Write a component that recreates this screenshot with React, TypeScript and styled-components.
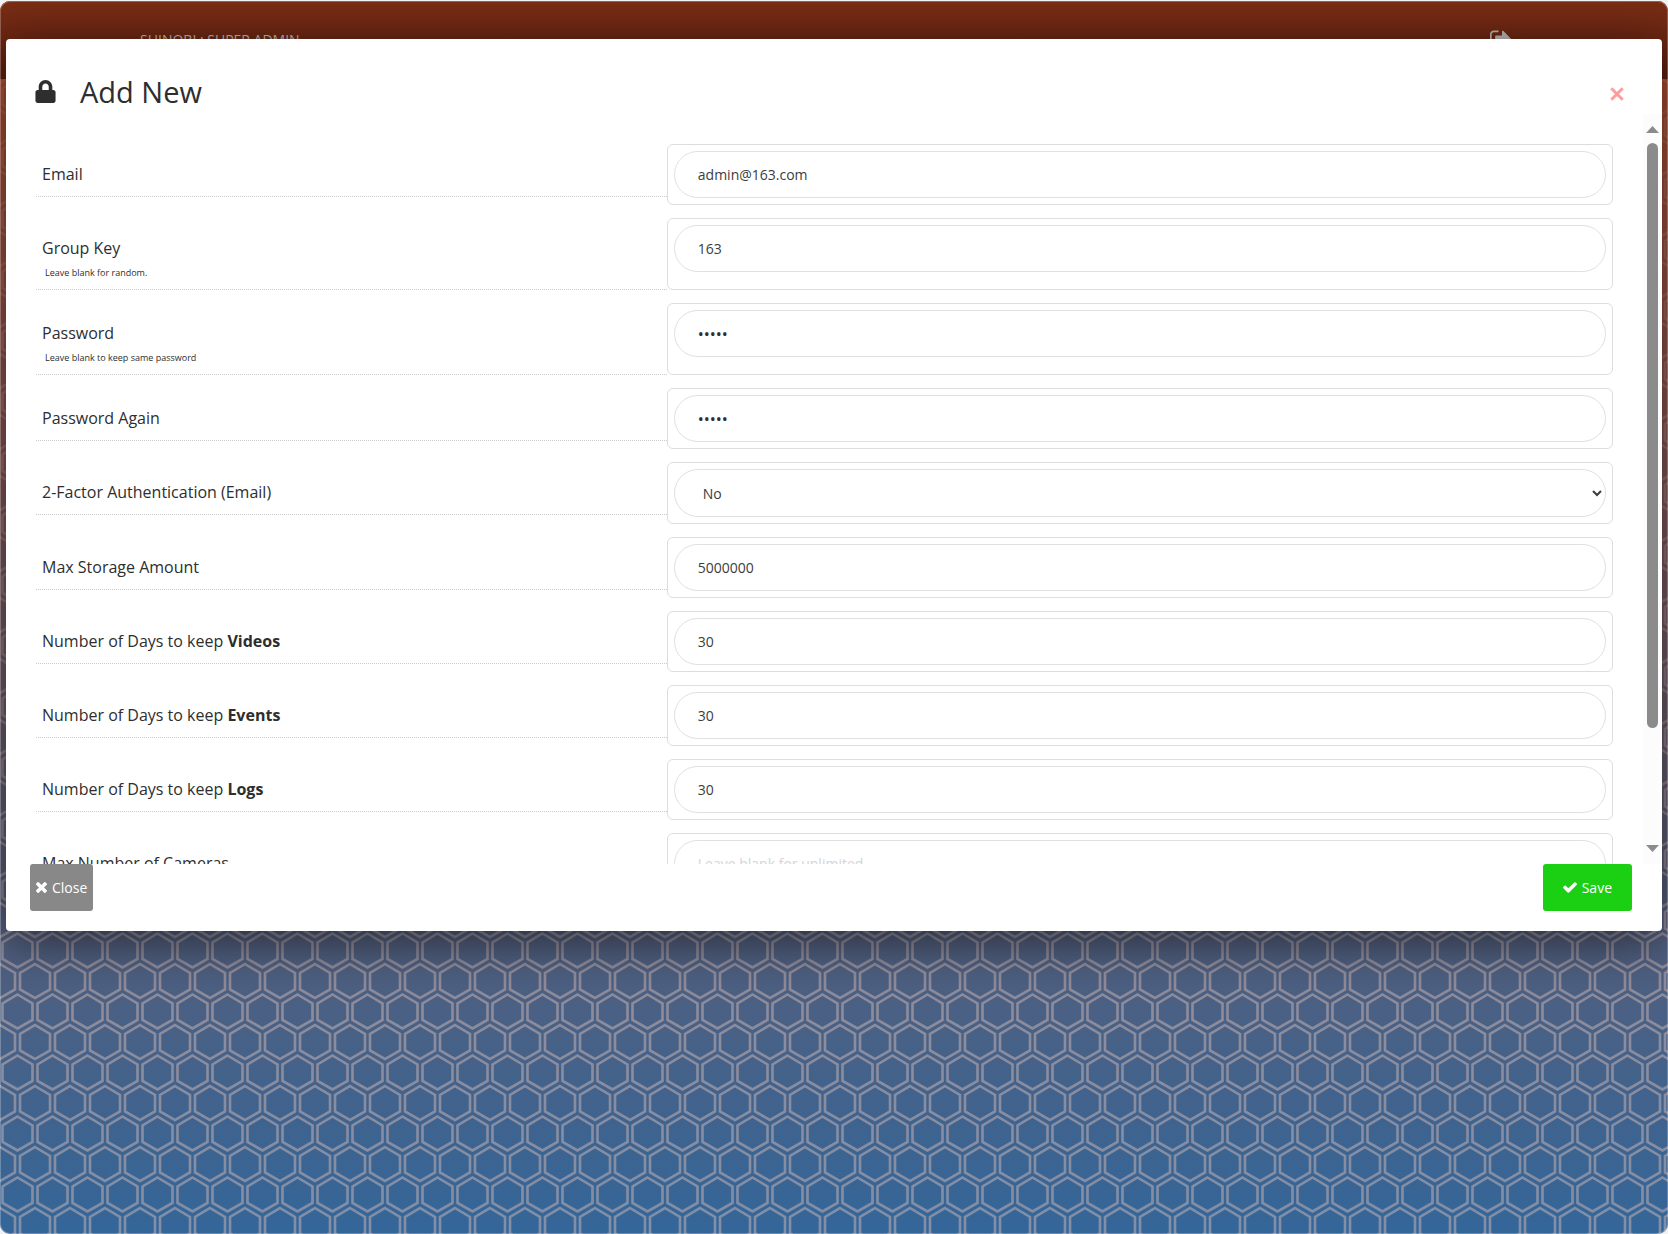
import React from 'react';
import styled, { createGlobalStyle } from 'styled-components';
import { FaLock } from 'react-icons/fa';

const GlobalStyle = createGlobalStyle`
  * { box-sizing: border-box; }
  html, body { margin: 0; background: #f2f2f2; }
  body, input, select, button { font-family: "Open Sans", "Noto Sans", sans-serif; }
`;

const Page = styled.div`
  position: relative;
  height: calc(100vh - 1px);
  margin-top: 1px;
  border-radius: 10px;
  overflow: hidden;
  background: linear-gradient(180deg, #b8502a 0%, #a44a30 8%, #346699 100%);

  &::after {
    content: "";
    position: absolute;
    inset: 0;
    border-radius: 10px;
    box-shadow: inset 0 0 0 1px rgba(255, 255, 255, 0.25);
    pointer-events: none;
  }
`;

const Pattern = styled.svg`
  position: absolute;
  inset: 0;
  width: 100%;
  height: 100%;
  mask-image: linear-gradient(180deg, rgba(0, 0, 0, 0.2), rgba(0, 0, 0, 0.6) 55%, #000 80%);
`;

const TopBar = styled.header`
  position: relative;
  display: flex;
  justify-content: space-between;
  height: 78px;
  padding: 26px 154px 0 140px;
  color: #bbb5b2;
  font-size: 14px;
  line-height: 26px;
  background: linear-gradient(180deg, #7a2d15, #5c1f0f);
`;

const Brand = styled.span``;

const Overlay = styled.div`
  position: absolute;
  inset: 38px 6px auto;
`;

const Modal = styled.section`
  display: flex;
  flex-direction: column;
  border-radius: 4px;
  background: #fff;
  color: #2e2e2e;
  box-shadow: 0 10px 50px rgba(0, 0, 0, 0.55);
`;

const ModalHeader = styled.header`
  display: flex;
  align-items: center;
  gap: 23px;
  height: 75px;
  padding: 30px 38px 0 28px;
`;

const Title = styled.h1`
  flex: 1;
  margin: 0;
  font-size: 29px;
  font-weight: 400;
  line-height: 40px;
`;

const IconButton = styled.button`
  display: flex;
  padding: 4px 0 0;
  border: 0;
  background: none;
  color: #ff9d9d;
`;

const Body = styled.div`
  display: flex;
  height: 750px;
`;

const Fields = styled.form`
  flex: 1;
  display: flex;
  flex-direction: column;
  gap: 13px;
  padding: 30px 30px 0;
  overflow: hidden;
`;

const Row = styled.div`
  display: grid;
  grid-template-columns: 2fr 3fr;
  align-items: start;
  flex: none;
`;

const Label = styled.label`
  display: flex;
  flex-direction: column;
  padding: 18px 6px 10px;
  border-bottom: 1px dotted #ccc;
  font-size: 16px;
  line-height: 24px;
`;

const LabelLine = styled.span``;

const Hint = styled.small`
  padding: 7px 3px 0;
  font-size: 9px;
  line-height: 12px;
`;

const FieldBox = styled.div`
  align-self: stretch;
  padding: 6px;
  border: 1px solid #ddd;
  border-radius: 6px;
`;

const TextInput = styled.input`
  display: block;
  width: 100%;
  height: 47px;
  padding: 0 23px;
  border: 1px solid #e0e0e0;
  border-radius: 24px;
  background: #fff;
  color: #3c3c3c;
  font-size: 14px;
  outline: 0;
  &::placeholder { color: #d4d4d4; }
  &[type="password"] { font-size: 16px; color: #2e2e2e; }
`;

const SelectInput = styled.select`
  display: block;
  width: 100%;
  height: 48px;
  padding: 0 2px 0 24px;
  border: 1px solid #e0e0e0;
  border-radius: 24px;
  background: #fff;
  color: #3c3c3c;
  font-size: 14px;
`;

const ScrollTrack = styled.div`
  display: flex;
  flex-direction: column;
  align-items: center;
  width: 19px;
  padding: 12px 0;
  background: #fcfcfc;
`;

const ScrollArrow = styled.svg`
  width: 13px;
  height: 7px;
`;

const ScrollThumb = styled.div`
  width: 11px;
  height: 585px;
  margin: 10px 0 auto;
  border-radius: 6px;
  background: #8b8b8b;
`;

const ModalFooter = styled.footer`
  display: flex;
  justify-content: space-between;
  padding: 0 30px 20px 24px;
`;

const ActionButton = styled.button<{ $tone: string; $pad: number }>`
  display: flex;
  align-items: center;
  gap: 5px;
  height: 47px;
  padding: 0 ${(p) => p.$pad}px;
  border: 0;
  border-radius: 3px;
  background: ${(p) => p.$tone};
  color: #fff;
  font-size: 14px;
`;

type Field = {
  id: string;
  label: string;
  strong?: string;
  hint?: string;
  type?: string;
  value?: string;
  placeholder?: string;
  options?: string[];
};

const fields: Field[] = [
  { id: 'mail', label: 'Email', value: 'admin@163.com' },
  { id: 'ke', label: 'Group Key', hint: 'Leave blank for random.', value: '163' },
  { id: 'pass', label: 'Password', hint: 'Leave blank to keep same password', type: 'password', value: 'admin' },
  { id: 'pass2', label: 'Password Again', type: 'password', value: 'admin' },
  { id: 'factor', label: '2-Factor Authentication (Email)', options: ['No', 'Yes'] },
  { id: 'size', label: 'Max Storage Amount', value: '5000000' },
  { id: 'days', label: 'Number of Days to keep ', strong: 'Videos', value: '30' },
  { id: 'events', label: 'Number of Days to keep ', strong: 'Events', value: '30' },
  { id: 'logs', label: 'Number of Days to keep ', strong: 'Logs', value: '30' },
  { id: 'cameras', label: 'Max Number of Cameras', placeholder: 'Leave blank for unlimited' },
];

const HexPattern = () => (
  <Pattern aria-hidden="true">
    <defs>
      <pattern id="hex" width="35" height="61" y="16" patternUnits="userSpaceOnUse">
        <g fill="none" stroke="#ecc8bc" strokeOpacity="0.42" strokeWidth="2.6">
          <path d="M17.5 1.5 32.5 10.5V27L17.5 35.5 2.5 27V10.5Z" />
          <path d="M0 32 15 41V57.5L0 66 -15 57.5V41Z" />
          <path d="M35 32 50 41V57.5L35 66 20 57.5V41Z" />
          <path d="M0 -29 15 -20V-3.5L0 5 -15 -3.5V-20Z" />
          <path d="M35 -29 50 -20V-3.5L35 5 20 -3.5V-20Z" />
        </g>
      </pattern>
    </defs>
    <rect width="100%" height="100%" fill="url(#hex)" />
  </Pattern>
);

const SignOutIcon = () => (
  <svg width="24" height="24" viewBox="0 0 1792 1792" fill="currentColor" aria-hidden="true">
    <path d="M640 1440q0 4 1 20t.5 26.5-3 23.5-10 19.5-20.5 6.5h-320q-119 0-203.5-84.5t-84.5-203.5v-704q0-119 84.5-203.5t203.5-84.500h320q13 0 22.5 9.5t9.5 22.5q0 4 1 20t.5 26.5-3 23.5-10 19.5-20.5 6.5h-320q-66 0-113 47t-47 113v704q0 66 47 113t113 47h312l11.5 1 11.5 3 8 5.5 7 9 2 13.5zm928-544q0 26-19 45l-544 544q-19 19-45 19t-45-19-19-45v-288h-448q-26 0-45-19t-19-45v-384q0-26 19-45t45-19h448v-288q0-26 19-45t45-19 45 19l544 544q19 19 19 45z" />
  </svg>
);

const CloseIcon = () => (
  <svg width="11" height="11" viewBox="302 366 1188 1188" fill="currentColor" aria-hidden="true">
    <path d="M1490 1322q0 40-28 68l-136 136q-28 28-68 28t-68-28l-294-294-294 294q-28 28-68 28t-68-28l-136-136q-28-28-28-68t28-68l294-294-294-294q-28-28-28-68t28-68l136-136q28-28 68-28t68 28l294 294 294-294q28-28 68-28t68 28l136 136q28 28 28 68t-28 68l-294 294 294 294q28 28 28 68z" />
  </svg>
);

const CheckIcon = () => (
  <svg width="14" height="11" viewBox="121 334 1550 1188" fill="currentColor" aria-hidden="true">
    <path d="M1671 566q0 40-28 68l-724 724-136 136q-28 28-68 28t-68-28l-136-136-362-362q-28-28-28-68t28-68l136-136q28-28 68-28t68 28l294 295 656-657q28-28 68-28t68 28l136 136q28 28 28 68z" />
  </svg>
);

const DismissIcon = () => (
  <svg width="14" height="14" viewBox="0 0 14 14" stroke="currentColor" strokeWidth="3" aria-hidden="true">
    <path d="M1.300 1.300 12.700 12.700M12.700 1.300 1.300 12.700" />
  </svg>
);

export default function App() {
  return (
    <>
      <GlobalStyle />
      <Page>
        <HexPattern />
        <TopBar>
          <Brand>SHINOBI : SUPER ADMIN</Brand>
          <SignOutIcon />
        </TopBar>
        <Overlay>
          <Modal role="dialog" aria-labelledby="title">
            <ModalHeader>
              <FaLock size={23} />
              <Title id="title">Add New</Title>
              <IconButton type="button" aria-label="Dismiss">
                <DismissIcon />
              </IconButton>
            </ModalHeader>
            <Body>
              <Fields id="account">
                {fields.map((f) => (
                  <Row key={f.id}>
                    <Label htmlFor={f.id}>
                      <LabelLine>
                        {f.label}
                        {f.strong && <b>{f.strong}</b>}
                      </LabelLine>
                      {f.hint && <Hint>{f.hint}</Hint>}
                    </Label>
                    <FieldBox>
                      {f.options ? (
                        <SelectInput id={f.id}>
                          {f.options.map((o) => (
                            <option key={o}>{o}</option>
                          ))}
                        </SelectInput>
                      ) : (
                        <TextInput id={f.id} type={f.type ?? 'text'} defaultValue={f.value} placeholder={f.placeholder} />
                      )}
                    </FieldBox>
                  </Row>
                ))}
              </Fields>
              <ScrollTrack aria-hidden="true">
                <ScrollArrow viewBox="0 0 13 7"><path d="M0 7 6.5 0 13 7Z" fill="#8b8b8b" /></ScrollArrow>
                <ScrollThumb />
                <ScrollArrow viewBox="0 0 13 7"><path d="M0 0 6.5 7 13 0Z" fill="#8b8b8b" /></ScrollArrow>
              </ScrollTrack>
            </Body>
            <ModalFooter>
              <ActionButton type="button" $tone="#888" $pad={6}>
                <CloseIcon /> Close
              </ActionButton>
              <ActionButton type="submit" form="account" $tone="#1bcf12" $pad={20}>
                <CheckIcon /> Save
              </ActionButton>
            </ModalFooter>
          </Modal>
        </Overlay>
      </Page>
    </>
  );
}
